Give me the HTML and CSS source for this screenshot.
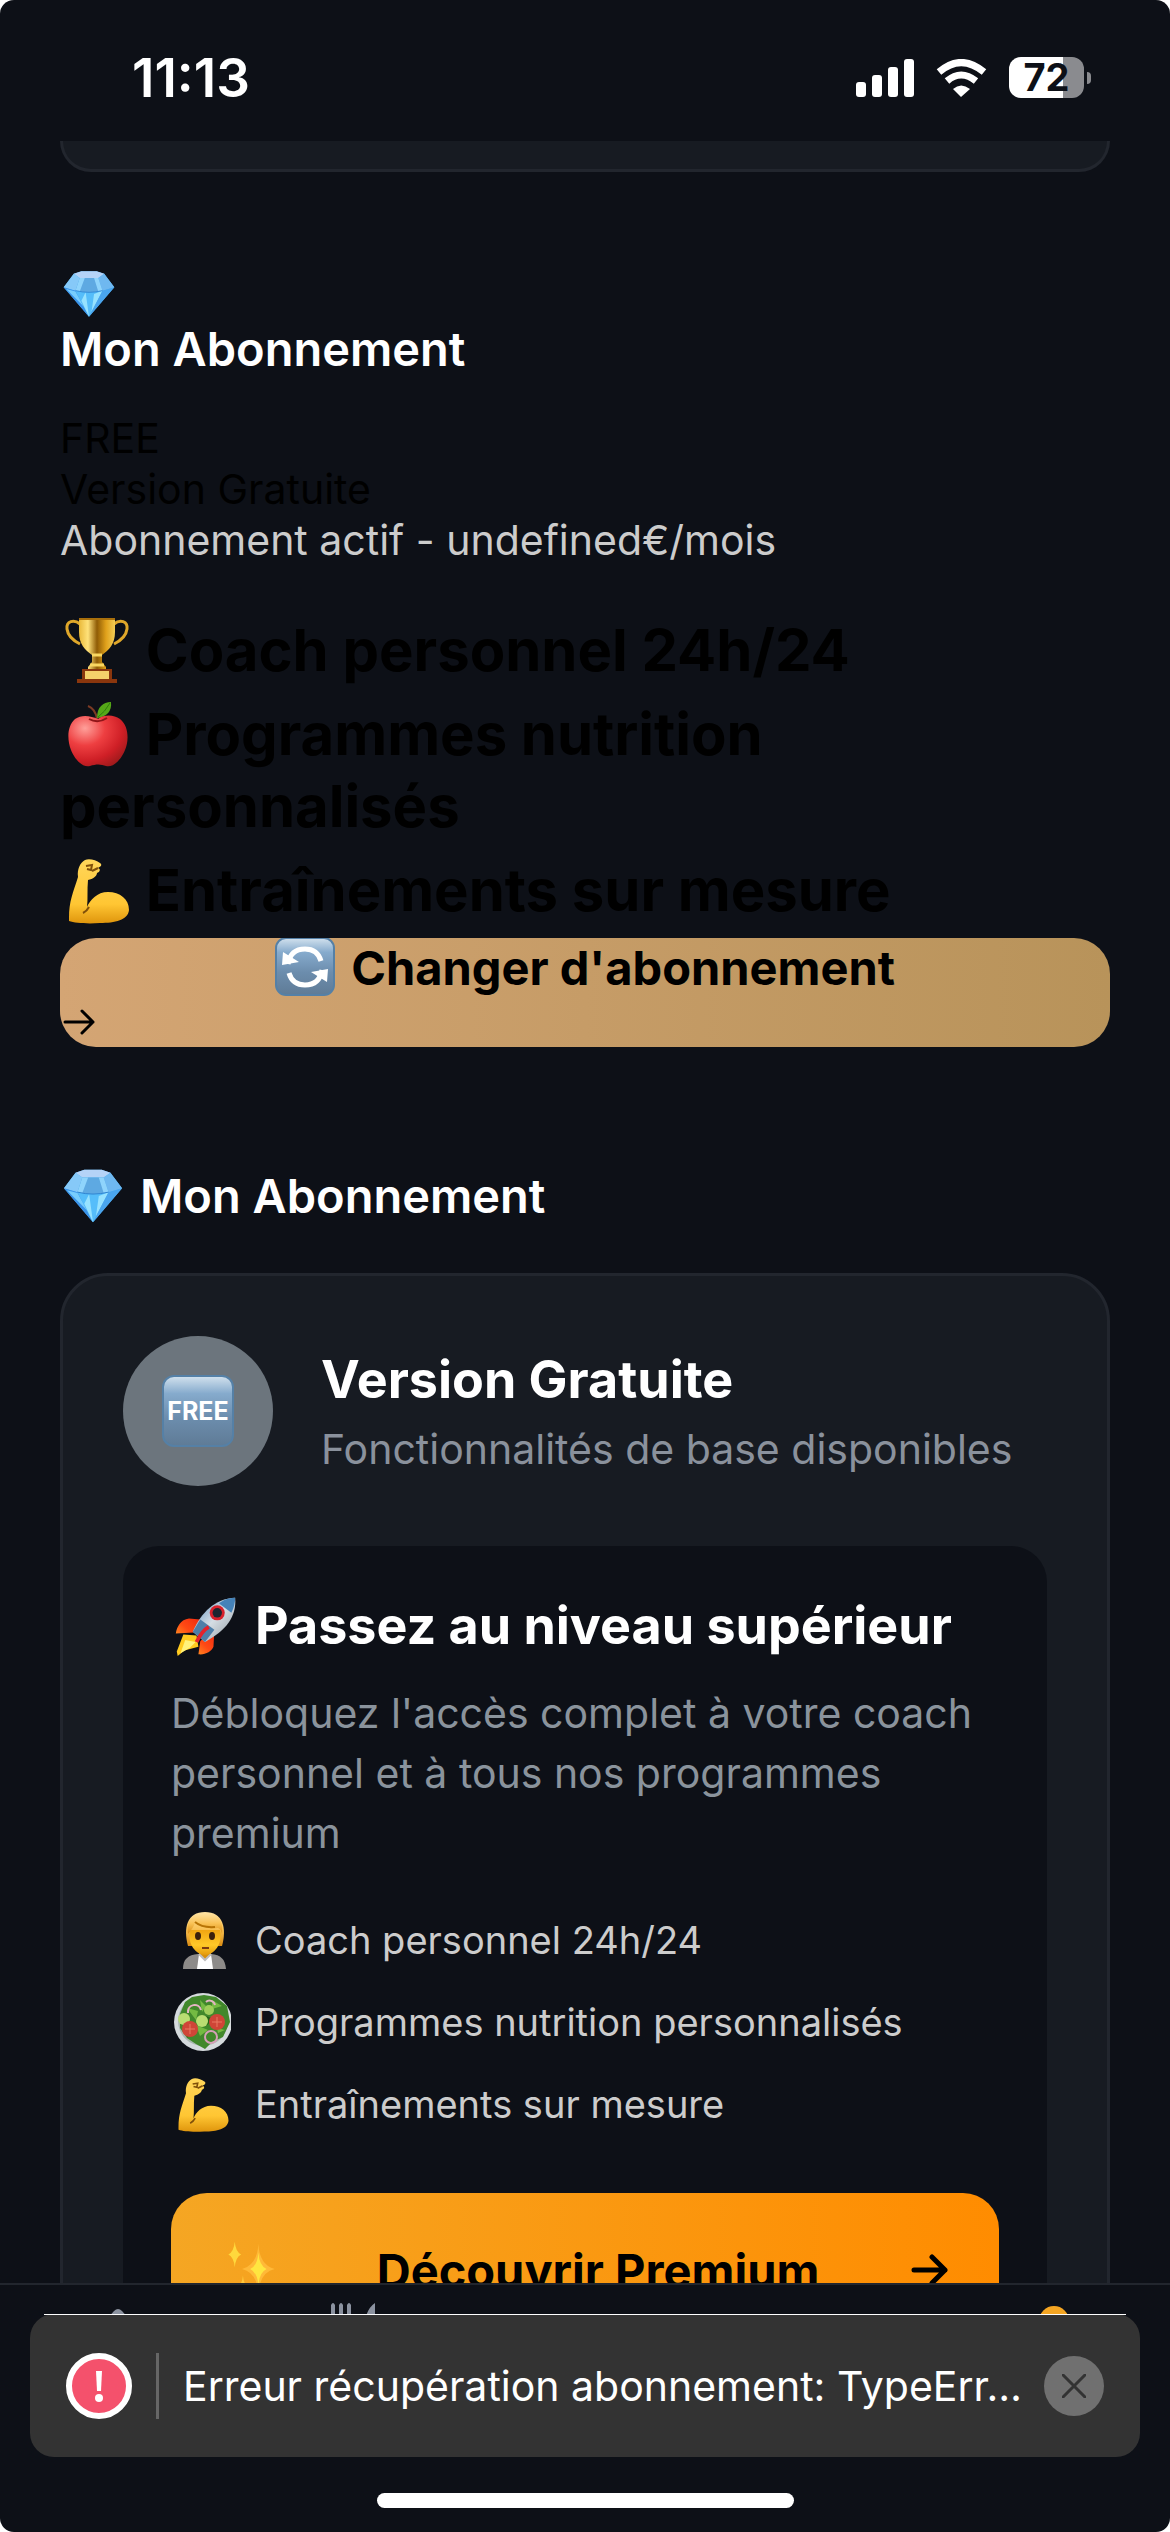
FILE: index.html
```html
<!DOCTYPE html>
<html lang="fr">
<head>
<meta charset="utf-8">
<meta name="viewport" content="width=device-width, initial-scale=1">
<title>Mon Abonnement</title>
<link rel="stylesheet" href="styles.css">
</head>
<body>
<svg class="defs" width="0" height="0" aria-hidden="true">
  <defs>
    <linearGradient id="gold" x1="0" x2="1" y1="0" y2="0"><stop offset="0" stop-color="#e9b93a"/><stop offset=".25" stop-color="#ffe27a"/><stop offset=".5" stop-color="#8f5c05"/><stop offset=".75" stop-color="#e0a11b"/><stop offset="1" stop-color="#f3cd55"/></linearGradient>
    <radialGradient id="red" cx=".28" cy=".25" r=".85"><stop offset="0" stop-color="#ffa09a"/><stop offset=".4" stop-color="#ee3f41"/><stop offset=".75" stop-color="#cf1f26"/><stop offset="1" stop-color="#a01a1c"/></radialGradient>
    <linearGradient id="skin" x1="0" x2="0" y1="0" y2="1"><stop offset="0" stop-color="#ffd65a"/><stop offset=".7" stop-color="#ffc633"/><stop offset="1" stop-color="#df950c"/></linearGradient>
    <linearGradient id="face" x1="0" x2="0" y1="0" y2="1"><stop offset="0" stop-color="#f0a512"/><stop offset=".6" stop-color="#ffc928"/><stop offset="1" stop-color="#e39a0c"/></linearGradient>
    <linearGradient id="tile" x1="0" x2="0" y1="0" y2="1"><stop offset="0" stop-color="#d3e2ee"/><stop offset=".25" stop-color="#86abcd"/><stop offset=".6" stop-color="#6c8dad"/><stop offset="1" stop-color="#5f7b96"/></linearGradient>
    <linearGradient id="hull" x1="0" x2="1" y1="0" y2="1"><stop offset="0" stop-color="#4d86bd"/><stop offset=".5" stop-color="#d5dde4"/><stop offset="1" stop-color="#8d979e"/></linearGradient>
    <linearGradient id="fire" x1="1" x2="0" y1="0" y2="1"><stop offset="0" stop-color="#e8180c"/><stop offset=".5" stop-color="#ff4a14"/><stop offset="1" stop-color="#ffd52e"/></linearGradient>
    <linearGradient id="hair" x1="0" x2="0" y1="0" y2="1"><stop offset="0" stop-color="#ffe3a2"/><stop offset=".5" stop-color="#f9c255"/><stop offset="1" stop-color="#d98c12"/></linearGradient>
    <symbol id="gem" viewBox="0 0 64 64">
      <path d="M14 8 23 5H41L50 8 62 24 32 59 2 24Z" fill="#4fb0f5"/>
      <path d="M14 8 23 5H41L50 8 43 13H21Z" fill="#b5d3f7"/>
      <path d="M14 8 21 13 16 28 2 24Z" fill="#86c9f8"/>
      <path d="M50 8 43 13 48 28 62 24Z" fill="#6fb8f0"/>
      <path d="M21 13H43L48 28Q32 32 16 28Z" fill="#5ea9e2"/>
      <path d="M27 13 21 29 16 28 21 13ZM38 13 43 29 48 28 43 13Z" fill="#8fd4fc"/>
      <path d="M2 24 16 28 32 59Z" fill="#3a93ea"/>
      <path d="M5 26 16 29 26 47Z" fill="#77cdfd"/>
      <path d="M16 28Q32 32 48 28L32 59Z" fill="#55bdfa"/>
      <path d="M28 30 32 59 23 40ZM48 28 35 53 38 32Z" fill="#97e2ff"/>
      <path d="M62 24 48 28 32 59Z" fill="#4aa5ee"/>
      <path d="M16 28Q32 32 48 28" fill="none" stroke="#2f83cf"/>
    </symbol>
    <symbol id="trophy" viewBox="0 0 72 72">
      <path d="M20 10C14 5 6 7 7 15S16 28 20 30M54 10C60 5 68 7 67 15S58 28 54 30" fill="none" stroke="#dfa72a" stroke-width="3"/>
      <path d="M19 4H55V18C55 30 49 36 42 41V48L46 53V56H28V53L32 48V41C25 36 19 30 19 18Z" fill="url(#gold)"/>
      <path d="M19 4H55V6H19Z" fill="#a86f0b"/>
      <path d="M32 41H42M30 51H44" stroke="#f9d761" stroke-width="3"/>
      <path d="M22 55H52V65H57V69H17V65H22Z" fill="#8a360d"/>
      <path d="M25 57H49V65H25Z" fill="#f5d06a"/>
    </symbol>
    <symbol id="apple" viewBox="0 0 72 72">
      <path d="M37 21C36 14 33 10 28 8" fill="none" stroke="#7b3a24" stroke-width="2"/>
      <path d="M37 20C37 9 43 4 51 4C52 13 47 19 37 20Z" fill="#55a818"/>
      <path d="M38 19Q45 14 50 5" stroke="#2f7d0c" fill="none"/>
      <path d="M38 21C45 16 54 17 60 21C69 28 69 43 65 52C61 62 53 70 46 68C41 66 36 66 30 68C23 70 15 62 11 52C7 42 7 28 15 21C22 16 31 18 38 21Z" fill="url(#red)"/>
      <path d="M29 21Q38 26 47 20" fill="none" stroke="#8f1518" stroke-width="2"/>
    </symbol>
    <symbol id="arm" viewBox="0 0 72 72">
      <path d="M9 64C9 47 13 39 18 23C17 15 20 9 25 6C29 4 36 6 40 9C43 11 40 13 38 14C41 15 40 18 37 19C37 22 33 25 28 26C27 36 28 45 27 53C30 46 37 38 48 38C60 38 69 45 69 56C68 66 55 69 40 69C27 70 15 69 9 67Z" fill="url(#skin)"/>
      <path d="M26 12 32 11 31 16 27 15M38 14 32 17M29 53Q27 57 23 59" fill="none" stroke="#80500a" stroke-width="2"/>
    </symbol>
    <symbol id="cycle" viewBox="0 0 60 60">
      <rect x="1" y="1" width="58" height="57" rx="10" fill="url(#tile)" stroke="#5580a6" stroke-width="2"/>
      <path d="M13 27C15 15 23 12 30 12C39 12 44 17 46 24M47 33C45 45 37 48 30 48C21 48 16 43 14 36" fill="none" stroke="#fff" stroke-width="5"/>
      <path d="M8 15 24 25 7 28ZM52 45 36 35 53 32Z" fill="#fff"/>
    </symbol>
    <symbol id="free" viewBox="0 0 72 72">
      <rect x="1" y="1" width="70" height="70" rx="11" fill="url(#tile)" stroke="#5580a6" stroke-width="2"/>
      <text x="36" y="45" text-anchor="middle" class="free-label">FREE</text>
    </symbol>
    <symbol id="rocket" viewBox="0 0 68 68">
      <path d="M17 26 29 27 22 41 3 42C4 35 8 27 17 26ZM44 38 43 56C41 61 34 65 27 64L29 50Z" fill="url(#fire)"/>
      <path d="M11 43 25 44 27 56 12 60 5 66 4 61Z" fill="#ffcb1f"/>
      <path d="M8 63 13 49 24 51 18 57Z" fill="#fff27a"/>
      <path d="M66 4C68 24 56 39 34 51L21 40C30 20 44 5 66 4Z" fill="url(#hull)"/>
      <path d="M66 4C58 4 53 7 49 10L62 20C65 14 66 9 66 4Z" fill="#4582b8"/>
      <path d="M29 27 44 38 34 51 21 40Z" fill="#4e7ea8"/>
      <circle cx="47" cy="20" r="8" fill="#d8202b"/><circle cx="47" cy="20" r="5" fill="#1d2430"/>
      <path d="M38 35Q31 39 25 51" fill="none" stroke="#e5222b" stroke-width="4"/>
    </symbol>
    <symbol id="coach" viewBox="0 0 60 60">
      <path d="M12 59C12 49 17 45 27 44H40C50 45 54 49 55 59Z" fill="#8d8b89"/>
      <path d="M28 44H40L42 59H26Z" fill="#fff"/>
      <path d="M28 38H40V45L34 50 28 45Z" fill="#d8900c"/>
      <path d="M28 44 34 50 40 44" fill="none" stroke="#bdbdbd" stroke-width="2"/>
      <path d="M17 36C12 18 16 2 34 2C52 2 56 18 51 36Z" fill="url(#hair)"/>
      <path d="M19 20H49C52 34 43 45 34 45C25 45 16 34 19 20Z" fill="url(#face)"/>
      <path d="M17 24C15 10 22 3 34 3C46 3 53 10 51 24Q50 19 47 18C38 19 29 17 24 12C23 17 20 20 17 24Z" fill="url(#hair)"/>
      <path d="M24 12Q31 18 44 17" fill="none" stroke="#b77405" stroke-width="2"/>
      <ellipse cx="27" cy="26" rx="3" ry="4" fill="#3b210c"/><ellipse cx="41" cy="26" rx="3" ry="4" fill="#3b210c"/>
      <path d="M31 38H38" stroke="#7c3b10" stroke-width="2"/>
    </symbol>
    <symbol id="salad" viewBox="0 0 60 60">
      <circle cx="32" cy="30" r="29" fill="#d5dadd"/><circle cx="32" cy="29" r="25" fill="#a9b8b0"/>
      <path d="M9 22 14 10 21 5 33 3 45 5 56 14 59 30 52 45 41 50 34 57 25 52 16 46 9 36Z" fill="#41882b"/>
      <path d="M16 16 27 19 25 28ZM41 8 51 14 41 17ZM25 33 37 38 29 44ZM46 36 54 38 47 41ZM29 8 35 14 31 20Z" fill="#74ba42"/>
      <path d="M35 24 43 27 36 33ZM18 33 12 38 17 46Z" fill="#236217"/>
      <path d="M17 21C16 12 28 10 30 18M35 10C38 7 43 9 44 13" fill="none" stroke="#e5b4c4" stroke-width="2"/>
      <circle cx="40" cy="45" r="6" fill="none" stroke="#d5a0b6" stroke-width="2"/>
      <circle cx="13" cy="27" r="6" fill="#b9dd72"/><circle cx="31" cy="29" r="6" fill="#b9dd72"/><circle cx="38" cy="18" r="5" fill="#9fce5b"/>
      <circle cx="19" cy="37" r="8" fill="#cf4537"/><circle cx="46" cy="30" r="8" fill="#cf4537"/>
      <path d="M14 37H24M19 32V42M41 30H51M46 25V35" stroke="#e87a62" stroke-width="1"/>
    </symbol>
    <symbol id="sparkles" viewBox="0 0 66 66">
      <path d="M40 4Q41 27 58 32Q41 36 40 60Q39 36 22 32Q39 27 40 4Z" fill="#ffb938"/>
      <path d="M40 14Q41 28 49 32Q41 36 40 50Q39 36 31 32Q39 28 40 14Z" fill="#ffe640"/>
      <path d="M14 2Q15 13 21 16Q15 19 14 30Q13 19 7 16Q13 13 14 2Z" fill="#ffd83c"/>
      <path d="M23 39Q24 50 30 52Q24 54 23 64Q22 54 16 52Q22 50 23 39Z" fill="#ffc83c"/>
    </symbol>
  </defs>
</svg>

<div class="app">
  <header class="status">
    <time class="clock">11:13</time>
    <div class="signals">
      <svg width="58" height="38" viewBox="0 0 58 38" fill="#fff" aria-hidden="true"><rect y="23" width="10" height="15" rx="3"/><rect x="16" y="16" width="10" height="22" rx="3"/><rect x="32" y="8" width="10" height="30" rx="3"/><rect x="48" width="10" height="38" rx="3"/></svg>
      <svg width="51" height="38" viewBox="0 0 51 38" aria-hidden="true"><g fill="none" stroke="#fff" stroke-width="7"><path d="M3 13Q25 -6 48 13"/><path d="M11 22Q25 10 40 22"/></g><path d="M17 30Q25 23 34 30L25 38Z" fill="#fff"/></svg>
      <div class="battery"><span class="level">72</span><span class="knob"></span></div>
    </div>
  </header>

  <main class="content">
    <div class="card card-end"></div>

    <section class="plan">
      <svg class="plan-gem"><use href="#gem"/></svg>
      <h2>Mon Abonnement</h2>
      <div class="plan-info">
        <p>FREE</p>
        <p>Version Gratuite</p>
        <p class="soft">Abonnement actif - undefined€/mois</p>
      </div>
      <div class="perks">
        <h3><svg><use href="#trophy"/></svg> Coach personnel 24h/24</h3>
        <h3><svg><use href="#apple"/></svg> Programmes nutrition personnalisés</h3>
        <h3><svg><use href="#arm"/></svg> Entraînements sur mesure</h3>
      </div>
      <button class="change" type="button">
        <span class="change-label"><svg class="cycle"><use href="#cycle"/></svg>Changer d'abonnement</span>
        <span class="change-arrow"><svg width="38" height="30" viewBox="0 0 38 30"><path d="M5 15H33M22 4 33 15 22 26" fill="none" stroke="#000" stroke-width="3" stroke-linecap="round" stroke-linejoin="round"/></svg></span>
      </button>
    </section>

    <section class="offer">
      <h2 class="offer-head"><svg><use href="#gem"/></svg>Mon Abonnement</h2>
      <div class="card">
        <div class="tier">
          <div class="tier-icon"><svg><use href="#free"/></svg></div>
          <div class="tier-text">
            <h3>Version Gratuite</h3>
            <p>Fonctionnalités de base disponibles</p>
          </div>
        </div>
        <div class="upgrade">
          <h3><svg><use href="#rocket"/></svg>Passez au niveau supérieur</h3>
          <p>Débloquez l'accès complet à votre coach personnel et à tous nos programmes premium</p>
          <ul>
            <li><svg><use href="#coach"/></svg>Coach personnel 24h/24</li>
            <li><svg><use href="#salad"/></svg>Programmes nutrition personnalisés</li>
            <li><svg><use href="#arm"/></svg>Entraînements sur mesure</li>
          </ul>
          <button class="premium" type="button">
            <svg class="sparkles"><use href="#sparkles"/></svg>
            <span>Découvrir Premium</span>
            <svg width="40" height="36" viewBox="0 0 40 36"><path d="M3 18H34M21 5 34 18 21 31" fill="none" stroke="#000" stroke-width="5" stroke-linecap="round" stroke-linejoin="round"/></svg>
          </button>
        </div>
      </div>
    </section>
  </main>

  <nav class="tabs">
    <a href="#accueil" aria-label="Accueil"><svg viewBox="0 0 60 60" fill="#8b92a0"><path d="M6 32 27 8Q31 4 35 8L56 32H50V56H12V32Z"/></svg></a>
    <a href="#nutrition" aria-label="Nutrition"><svg viewBox="0 0 60 60" fill="#8b92a0"><path d="M10 2Q12 -2 14 2V20H18V2Q20 -2 22 2V20H26V2Q28 -2 30 2V22Q30 28 23 29V58H17V29Q10 28 10 22ZM54 0V58H48V34H43Q42 8 54 0Z"/></svg></a>
    <a href="#profil" class="last" aria-label="Profil"><svg viewBox="0 0 60 60" fill="#f5a623"><circle cx="31" cy="18" r="15"/><path d="M4 58Q6 36 31 36T58 58Z"/></svg></a>
  </nav>

  <div class="toast" role="alert">
    <span class="alert-icon"><svg width="54" height="54" viewBox="0 0 54 54"><path d="M24 12H30L29 32H25Z" fill="#fff"/><circle cx="27" cy="39" r="4" fill="#fff"/></svg></span>
    <span class="divider"></span>
    <p>Erreur récupération abonnement: TypeErr…</p>
    <button class="close" type="button" aria-label="Fermer"><svg width="24" height="24" viewBox="0 0 24 24"><path d="M1 1 23 23M23 1 1 23" stroke="#333" stroke-width="3" stroke-linecap="round"/></svg></button>
  </div>
  <div class="home-bar"></div>
</div>
</body>
</html>
```
FILE: styles.css
```css
* { box-sizing: border-box; margin: 0; padding: 0; }
html { background: #fff; }
body { font-family: Inter, "Liberation Sans", sans-serif; font-size: 41px; color: #000; }
button { border: 0; font: inherit; color: #000; cursor: pointer; }
ul { list-style: none; }
.defs { position: absolute; }
.free-label { font-size: 25px; font-weight: 700; fill: #fff; }

.app {
  position: relative;
  display: flex;
  flex-direction: column;
  height: 100vh;
  overflow: hidden;
  background: #0d1017;
  border-radius: 14px;
}

/* Status bar */
.status {
  display: flex;
  flex: none;
  align-items: center;
  justify-content: space-between;
  height: 141px;
  padding: 14px 79px 0 132px;
  color: #fff;
}
.clock { font-size: 53px; font-weight: 600; }
.signals { display: flex; align-items: center; gap: 22px; }
.battery { display: flex; align-items: center; gap: 3px; }
.level {
  width: 75px;
  line-height: 41px;
  border-radius: 12px;
  background: linear-gradient(90deg, #fff 54px, #8a8b8f 54px);
  color: #0d1017;
  font-size: 38px;
  font-weight: 700;
  text-align: center;
}
.knob { width: 4px; height: 12px; border-radius: 0 6px 6px 0; background: #8a8b8f; }

/* Scrolling content */
.content { flex: 1; min-height: 0; overflow: hidden; padding: 0 60px; }
.card { padding: 60px; border: 3px solid #22262e; border-radius: 48px; background: #171b22; }
.card-end { height: 31px; padding: 0; border-top: 0; border-radius: 0 0 36px 36px; }
h2 { font-size: 47px; line-height: 56px; font-weight: 600; color: #fff; }

.plan { padding-top: 95px; }
.plan-gem { display: block; width: 54px; height: 54px; margin-left: 2px; }
.plan-info { margin-top: 36px; line-height: 51px; }
.soft { color: #ccc; }
.perks { margin-top: 48px; }
.perks h3 { margin-bottom: 12px; font-size: 58px; line-height: 72px; font-weight: 700; }
.perks svg { width: 72px; height: 72px; vertical-align: top; }

.change {
  display: flex;
  flex-direction: column;
  width: 100%;
  overflow: hidden;
  border-radius: 36px;
  background: linear-gradient(90deg, #d4a574, #b8935a);
}
.change-label {
  display: flex;
  align-items: center;
  justify-content: center;
  align-self: stretch;
  gap: 16px;
  height: 58px;
  font-size: 47px;
  font-weight: 700;
}
.cycle { width: 60px; height: 60px; }
.change-arrow { display: flex; align-items: center; height: 51px; }

.offer { margin-top: 120px; }
.offer-head { display: flex; align-items: center; gap: 16px; height: 58px; margin-bottom: 48px; padding-left: 2px; }
.offer-head svg { width: 62px; height: 62px; }
.tier { display: flex; align-items: center; gap: 48px; }
.tier-icon {
  display: grid;
  place-items: center;
  width: 150px;
  height: 150px;
  border-radius: 50%;
  background: #6c757d;
}
.tier-icon svg { width: 72px; height: 72px; }
.tier-text { display: grid; gap: 12px; }
.tier-text h3, .upgrade h3 { font-size: 52px; line-height: 64px; font-weight: 700; color: #fff; }
.tier-text p { line-height: 50px; color: #8a919c; }

.upgrade { margin-top: 60px; padding: 48px; border-radius: 36px; background: #0d1017; }
.upgrade h3 svg { width: 68px; height: 64px; margin-right: 16px; vertical-align: top; }
.upgrade p { margin-top: 25px; line-height: 60px; color: #8a939c; }
.upgrade ul { display: grid; gap: 24px; margin: 48px 0 60px; }
.upgrade li { display: flex; align-items: center; gap: 24px; height: 58px; font-size: 38px; color: #ccc; }
.upgrade li svg { width: 60px; height: 60px; }
.premium {
  display: flex;
  align-items: center;
  width: 100%;
  height: 154px;
  padding: 0 48px;
  border-radius: 36px;
  background: linear-gradient(90deg, #f5a623, #ff8c00);
  font-size: 47px;
  font-weight: 700;
}
.premium span { flex: 1; text-align: center; }
.sparkles { width: 66px; height: 60px; }

/* Bottom navigation */
.tabs {
  display: grid;
  flex: none;
  grid-template-columns: repeat(5, 1fr);
  height: 249px;
  padding-top: 18px;
  border-top: 2px solid #22262e;
}
.tabs a { text-align: center; }
.tabs svg { width: 60px; height: 60px; }
.tabs .last { grid-column: 5; }

/* Error toast */
.toast {
  position: absolute;
  right: 30px;
  bottom: 75px;
  left: 30px;
  display: flex;
  align-items: center;
  height: 143px;
  padding: 0 36px;
  border-radius: 24px;
  background: #333;
  color: #fff;
}
.toast::before {
  content: "";
  position: absolute;
  top: 0;
  right: 14px;
  left: 14px;
  height: 1px;
  background: #fff;
}
.alert-icon { flex: none; width: 66px; height: 66px; border: 6px solid #fff; border-radius: 50%; background: #f4516c; }
.divider { flex: none; width: 3px; height: 66px; margin: 0 24px; background: #666; }
.toast p { flex: 1; min-width: 0; overflow: hidden; white-space: nowrap; text-overflow: ellipsis; }
.close {
  display: grid;
  flex: none;
  place-items: center;
  width: 60px;
  height: 60px;
  margin-left: 12px;
  border-radius: 50%;
  background: #707070;
}

.home-bar {
  position: absolute;
  bottom: 24px;
  left: 50%;
  width: 417px;
  height: 15px;
  margin-left: -208px;
  border-radius: 8px;
  background: #fff;
}
```
